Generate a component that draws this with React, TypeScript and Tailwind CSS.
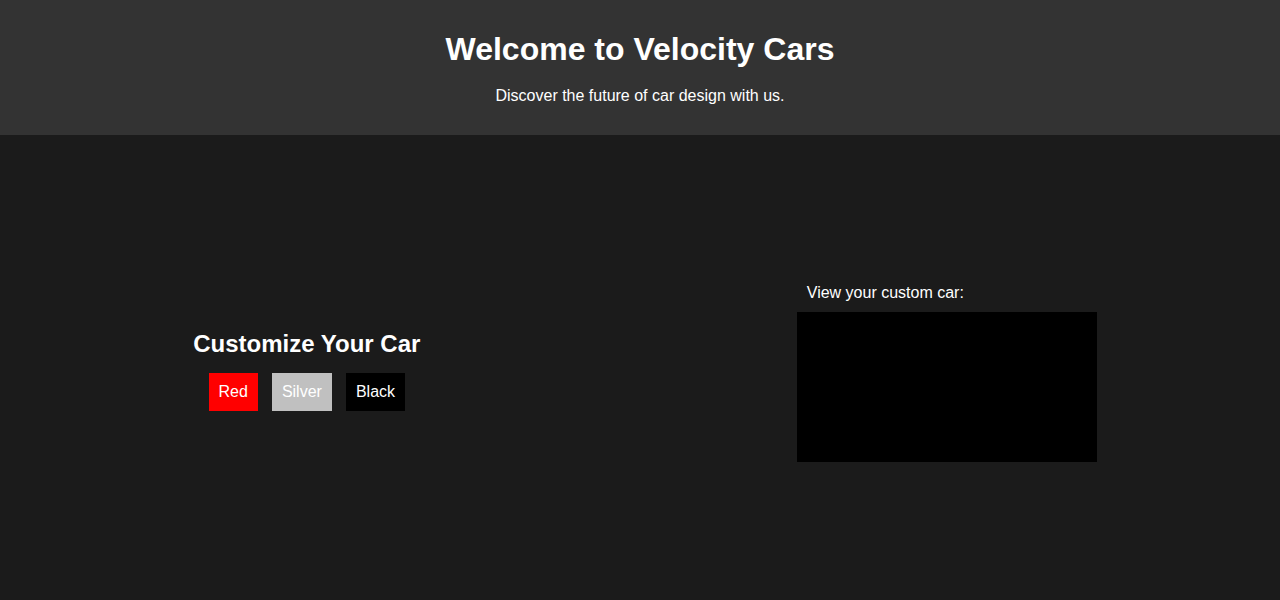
const swatches = [
  { name: "Red", className: "bg-[#ff0000]" },
  { name: "Silver", className: "bg-[#c0c0c0]" },
  { name: "Black", className: "bg-black" },
];

const App = () => {
  return (
    <div className="min-h-[600px] bg-[#1b1b1b] text-white font-['Liberation_Sans',Arial,sans-serif]">
      <header className="bg-[#333333] text-center pt-[31px] pb-[30px]">
        <h1 className="text-[32px] font-bold leading-[37px] mb-[19px]">
          Welcome to Velocity Cars
        </h1>
        <p className="text-base leading-[18px]">Discover the future of car design with us.</p>
      </header>

      <main className="h-[465px] pt-[11px] flex items-center justify-around">
        <section className="px-[10px] flex flex-col items-center">
          <h2 className="text-2xl font-bold leading-[28px] mb-[10px]">Customize Your Car</h2>
          <div className="flex gap-[14px] my-[5px]">
            {swatches.map((s) => (
              <button
                key={s.name}
                className={`${s.className} text-white text-base leading-[18px] px-[10px] py-[10px]`}
              >
                {s.name}
              </button>
            ))}
          </div>
        </section>

        <section className="flex flex-col">
          <p className="text-base leading-[18px] pl-[10px] mb-[10px]">View your custom car:</p>
          <div className="w-[300px] h-[150px] bg-black"></div>
        </section>
      </main>
    </div>
  );
};

export default App;
